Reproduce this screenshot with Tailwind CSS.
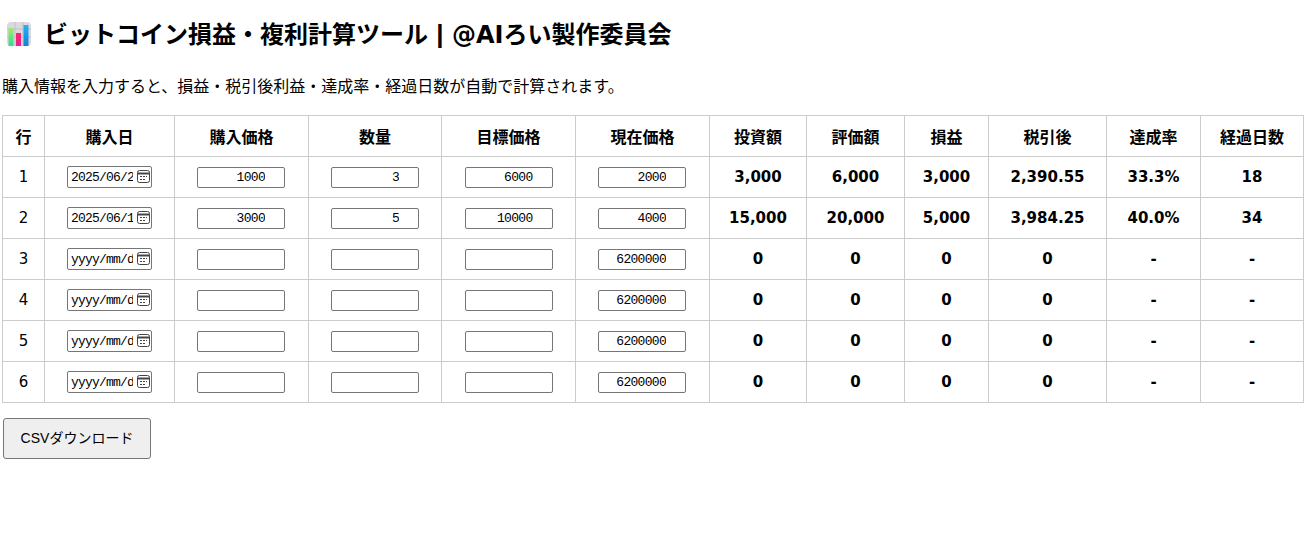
<!DOCTYPE html>
<html lang="ja">
<head>
  <meta charset="UTF-8">
  <title>ビットコイン損益・複利計算ツール</title>
  <script src="https://cdn.jsdelivr.net/npm/@tailwindcss/browser@4"></script>
</head>
<body class="bg-white text-black font-['DejaVu_Sans','Noto_Sans_CJK_JP',sans-serif] text-[16px]">
  <div class="px-[2px] pt-[19px]">
    <!-- Title -->
    <h1 class="flex items-center h-[30px] text-[24px] font-bold font-['Noto_Sans_CJK_JP',sans-serif]">
      <svg class="ml-[4px] mr-[12px] w-[26px] h-[26px]" viewBox="0 0 26 26">
        <defs>
          <linearGradient id="barGreen" x1="0" y1="0" x2="0" y2="1"><stop offset="0" stop-color="#a8e86a"/><stop offset="1" stop-color="#2fdc94"/></linearGradient>
          <linearGradient id="barPink" x1="0" y1="0" x2="0" y2="1"><stop offset="0" stop-color="#f8286a"/><stop offset="1" stop-color="#e8208a"/></linearGradient>
          <linearGradient id="barBlue" x1="0" y1="0" x2="0" y2="1"><stop offset="0" stop-color="#22b4f0"/><stop offset="1" stop-color="#1480d8"/></linearGradient>
        </defs>
        <rect x="1" y="1" width="24" height="24" rx="4" fill="#dcd8e0"/>
        <path d="M1 8h24M1 16h24M9 1v24M17 1v24" stroke="#c4c0c8" stroke-width="1"/>
        <rect x="2.500" y="7" width="5" height="18" fill="url(#barGreen)"/>
        <rect x="10" y="12" width="5" height="13" fill="url(#barPink)"/>
        <rect x="17.500" y="4" width="5" height="21" fill="url(#barBlue)"/>
      </svg>
      <span class="leading-[30px]">ビットコイン損益・複利計算ツール<span class="inline-block w-[24px] text-center font-['Liberation_Sans',sans-serif] font-bold text-[26px] leading-[26px]">|</span><span class="font-['DejaVu_Sans',sans-serif]">@AI</span>ろい製作委員会</span>
    </h1>

    <p class="mt-[25px] h-[22px] leading-[22px] font-['Noto_Sans_CJK_JP',sans-serif]">購入情報を入力すると、損益・税引後利益・達成率・経過日数が自動で計算されます。</p>

    <!-- Table -->
    <table class="mt-[19px] w-[1301px] table-fixed border-collapse text-center text-[15px]">
      <colgroup>
        <col class="w-[42px]"><col class="w-[130px]"><col class="w-[134px]"><col class="w-[133px]"><col class="w-[134px]"><col class="w-[134px]"><col class="w-[97px]"><col class="w-[98px]"><col class="w-[84px]"><col class="w-[118px]"><col class="w-[94px]"><col class="w-[103px]">
      </colgroup>
      <thead>
        <tr class="h-[41px] text-[16px] font-bold font-['Noto_Sans_CJK_JP',sans-serif]">
          <th class="border border-[#cccccc]">行</th>
          <th class="border border-[#cccccc]">購入日</th>
          <th class="border border-[#cccccc]">購入価格</th>
          <th class="border border-[#cccccc]">数量</th>
          <th class="border border-[#cccccc]">目標価格</th>
          <th class="border border-[#cccccc]">現在価格</th>
          <th class="border border-[#cccccc]">投資額</th>
          <th class="border border-[#cccccc]">評価額</th>
          <th class="border border-[#cccccc]">損益</th>
          <th class="border border-[#cccccc]">税引後</th>
          <th class="border border-[#cccccc]">達成率</th>
          <th class="border border-[#cccccc]">経過日数</th>
        </tr>
      </thead>
      <tbody id="rows"></tbody>
    </table>

    <button class="mt-[15px] w-[148px] h-[41px] ml-[1px] bg-[#efefef] border border-[#767676] rounded-[3px] text-[14px] font-['Liberation_Sans','Noto_Sans_CJK_JP',sans-serif]">CSVダウンロード</button>
  </div>

  <script>
    var data = [
      ["2025/06/2", "1000", "3", "6000", "2000", "3,000", "6,000", "3,000", "2,390.55", "33.3%", "18"],
      ["2025/06/1", "3000", "5", "10000", "4000", "15,000", "20,000", "5,000", "3,984.25", "40.0%", "34"],
      ["", "", "", "", "6200000", "0", "0", "0", "0", "-", "-"],
      ["", "", "", "", "6200000", "0", "0", "0", "0", "-", "-"],
      ["", "", "", "", "6200000", "0", "0", "0", "0", "-", "-"],
      ["", "", "", "", "6200000", "0", "0", "0", "0", "-", "-"]
    ];
    var td = `class="border border-[#cccccc]"`;
    var tdBold = `class="border border-[#cccccc] font-bold"`;
    var numInput = `class="block mx-auto w-[88px] h-[21px] border border-[#767676] rounded-[2px] text-right pr-[19px] text-[13px] tracking-[-0.7px] font-['Liberation_Mono',monospace]"`;
    var leftInput = `class="block ml-[22px] w-[88px] h-[21px] border border-[#767676] rounded-[2px] text-right pr-[19px] text-[13px] tracking-[-0.7px] font-['Liberation_Mono',monospace]"`;
    var dateInput = `class="block w-full h-full border border-[#767676] rounded-[2px] pl-[3px] pr-[18px] text-[13px] tracking-[-0.8px] text-black placeholder:text-black font-['Liberation_Mono',monospace]"`;
    var icon = '<svg class="absolute right-[1px] top-[3px] w-[15px] h-[15px]" viewBox="0 0 15 15" fill="none" stroke="#444"><rect x="1.500" y="1.500" width="12" height="12" rx="2"/><path d="M1.500 4.500h12" stroke-width="2"/><path d="M4 7.500h2M7 7.500h2M10 7.500h1M4 10.500h2M7 10.500h2" stroke-width="1"/></svg>';
    var html = "";
    data.forEach(function (r, i) {
      html += '<tr class="h-[41px]"><td ' + td + '>' + (i + 1) + '</td>';
      html += '<td ' + td + '><div class="relative mx-auto w-[85px] h-[22px]">' +
        '<input type="text" value="' + r[0] + '" placeholder="yyyy/mm/dd" ' + dateInput + '>' + icon + '</div></td>';
      for (var c = 1; c <= 4; c++) {
        // 購入価格 and 現在価格 sit 1px left of centre
        html += '<td ' + td + '><input type="text" value="' + r[c] + '" ' + (c === 1 || c === 4 ? leftInput : numInput) + '></td>';
      }
      for (var d = 5; d <= 10; d++) {
        html += '<td ' + tdBold + '>' + r[d] + '</td>';
      }
      html += '</tr>';
    });
    document.getElementById("rows").innerHTML = html;
  </script>
</body>
</html>
